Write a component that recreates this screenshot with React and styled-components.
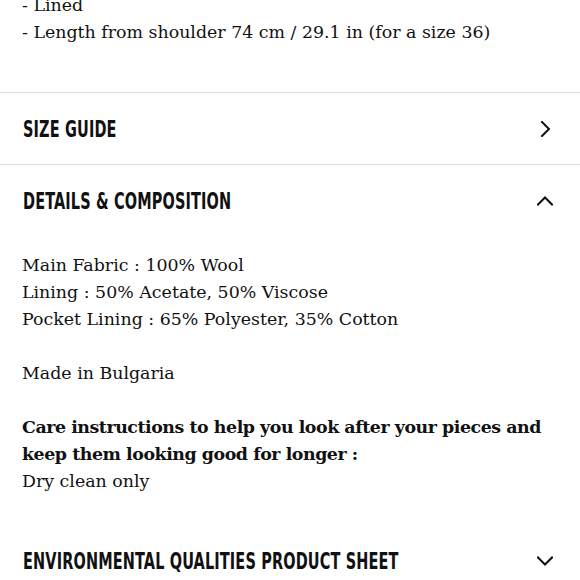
import React from 'react';
import styled, { createGlobalStyle } from 'styled-components';

const GlobalStyle = createGlobalStyle`
  html, body {
    margin: 0;
    padding: 0;
    background: #ffffff;
  }
  body {
    font-family: "DejaVu Serif", "Liberation Serif", serif;
    color: #111111;
    overflow: hidden;
  }
`;

const Page = styled.div`
  width: 580px;
  height: 580px;
  overflow: hidden;
`;

const Description = styled.div`
  margin-top: -8px;
  padding: 0 22px 46px;
  font-size: 17.4px;
  line-height: 27px;
`;

const Section = styled.section`
  border-top: ${p => (p.$divider ? '1px solid #dedede' : 'none')};
`;

const Header = styled.div`
  height: ${p => p.$height || 72}px;
  padding: 0 22px 0 23px;
  display: flex;
  align-items: center;
  justify-content: space-between;
  cursor: pointer;
`;

const Heading = styled.h2`
  flex: 1;
  min-width: 0;
  margin: 0;
  font-family: "DejaVu Sans", "Liberation Sans", sans-serif;
  font-stretch: condensed;
  font-weight: 700;
  font-size: 23px;
  letter-spacing: 0.2px;
  color: #111111;
  text-transform: uppercase;
  white-space: nowrap;
  transform: scaleX(0.7);
  transform-origin: left center;
`;

const Chevron = styled.svg`
  width: 16px;
  height: 16px;
  margin-right: 5px;
  flex-shrink: 0;
`;

const Body = styled.div`
  padding: 15px 22px 30px;
  font-size: 17.4px;
  line-height: 27px;
`;

const Para = styled.p`
  margin: 0 0 27px;
  &:last-child {
    margin-bottom: 0;
  }
`;

const Strong = styled.strong`
  font-weight: 700;
  letter-spacing: -0.45px;
`;

const paths = {
  right: 'M5 1 L12 8 L5 15',
  up: 'M1 11.5 L8 4.5 L15 11.5',
  down: 'M1 4.5 L8 11.5 L15 4.5',
};

const Icon = ({ dir }) => (
  <Chevron viewBox="0 0 16 16" fill="none">
    <path d={paths[dir]} stroke="#111" strokeWidth="2" strokeLinecap="square" strokeLinejoin="miter" />
  </Chevron>
);

const App = () => (
  <Page>
    <GlobalStyle />
    <Description>
      - Lined
      <br />
      - Length from shoulder 74 cm / 29.1 in (for a size 36)
    </Description>

    <Section $divider>
      <Header $height={71}>
        <Heading>Size guide</Heading>
        <Icon dir="right" />
      </Header>
    </Section>

    <Section $divider>
      <Header>
        <Heading>Details &amp; Composition</Heading>
        <Icon dir="up" />
      </Header>
      <Body>
        <Para>
          Main Fabric : 100% Wool
          <br />
          Lining : 50% Acetate, 50% Viscose
          <br />
          Pocket Lining : 65% Polyester, 35% Cotton
        </Para>
        <Para>Made in Bulgaria</Para>
        <Para>
          <Strong>
            Care instructions to help you look after your pieces and
            <br />
            keep them looking good for longer :
          </Strong>
          <br />
          Dry clean only
        </Para>
      </Body>
    </Section>

    <Section>
      <Header>
        <Heading>Environmental qualities product sheet</Heading>
        <Icon dir="down" />
      </Header>
    </Section>
  </Page>
);

export default App;
